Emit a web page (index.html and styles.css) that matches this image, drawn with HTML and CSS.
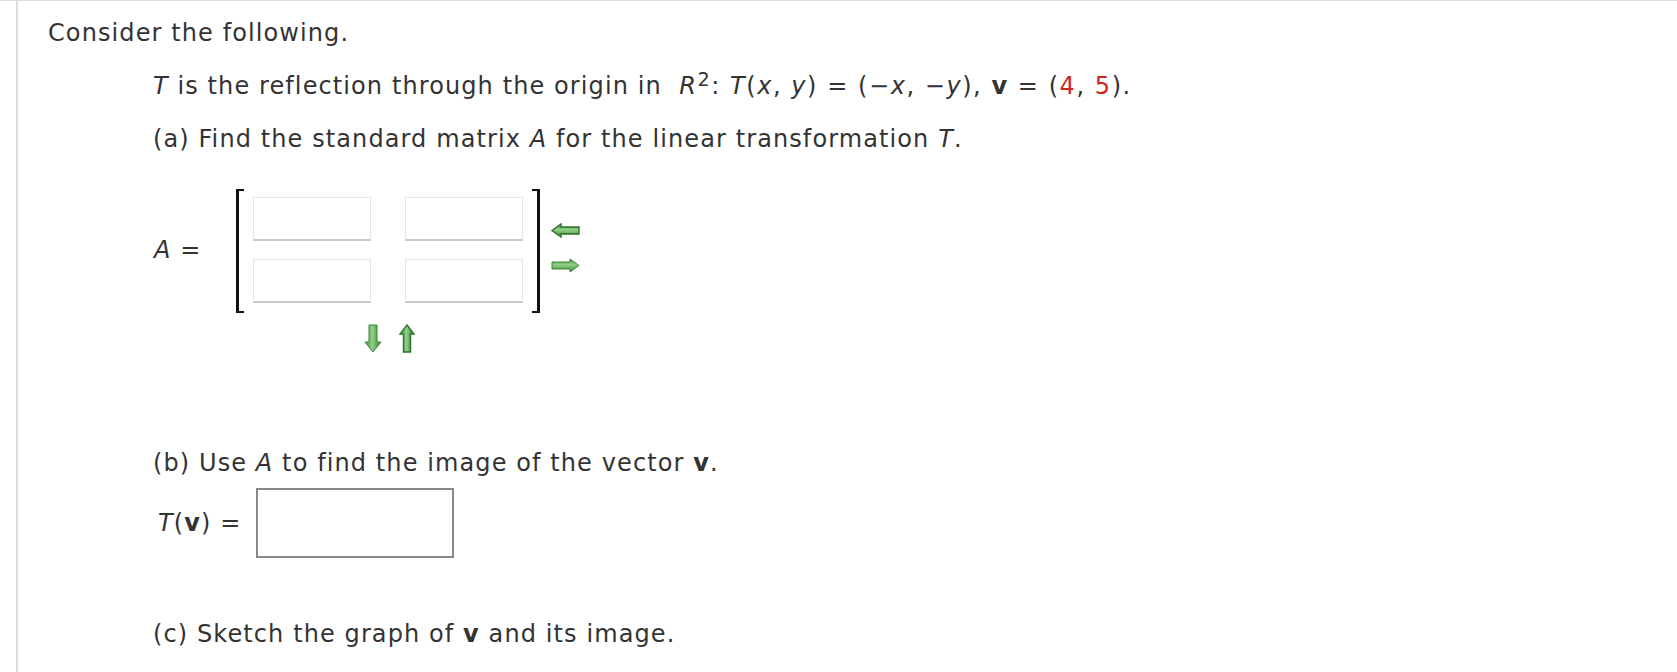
FILE: index.html
```html
<!DOCTYPE html>
<html lang="en">
<head>
  <meta charset="UTF-8" />
  <meta name="viewport" content="width=device-width, initial-scale=1.0" />
  <title>Linear Transformations</title>
  <link rel="stylesheet" href="styles.css">
</head>
<body>
  <div class="question">
    <p class="intro">Consider the following.</p>

    <div class="qbody">
      <p class="stmt"><i>T</i> is the reflection through the origin in &nbsp;<span class="math"><i>R</i><sup>2</sup>: <i>T</i>(<i>x</i>, <i>y</i>) = (−<i>x</i>, −<i>y</i>), <b>v</b> = (<span class="red">4</span>, <span class="red">5</span>).</span></p>
      <p class="part-a">(a) Find the standard matrix <i>A</i> for the linear transformation <i>T</i>.</p>

      <div class="matrix-row">
        <span class="mlabel"><i>A</i> =</span>
        <div class="matrix-wrap">
          <div class="matrix">
            <div class="bracket left"></div>
            <div class="cells">
              <input class="cell" type="text">
              <input class="cell" type="text">
              <input class="cell" type="text">
              <input class="cell" type="text">
            </div>
            <div class="bracket right"></div>
          </div>
          <div class="col-arrows">
            <svg width="18" height="29" viewBox="0 0 18 29">
              <defs>
                <linearGradient id="gv" x1="0" y1="0" x2="1" y2="0">
                  <stop offset="0" stop-color="#3f933c"/>
                  <stop offset="0.45" stop-color="#92d08a"/>
                  <stop offset="1" stop-color="#2f802c"/>
                </linearGradient>
              </defs>
              <polygon points="5,1 13,1 13,18 17,18 9,28 1,18 5,18" fill="url(#gv)" stroke="#3a8637" stroke-width="1"/>
            </svg>
            <svg width="16" height="29" viewBox="0 0 16 29">
              <polygon points="8,1 15,10 11.5,10 11.5,28 4.5,28 4.5,10 1,10" fill="url(#gv)" stroke="#2a7227" stroke-width="1.4"/>
            </svg>
          </div>
        </div>
        <div class="row-arrows">
          <svg width="29" height="15" viewBox="0 0 29 15">
            <defs>
              <linearGradient id="gh" x1="0" y1="0" x2="0" y2="1">
                <stop offset="0" stop-color="#3f933c"/>
                <stop offset="0.45" stop-color="#92d08a"/>
                <stop offset="1" stop-color="#2f802c"/>
              </linearGradient>
            </defs>
            <polygon points="1,7.5 10,1 10,4 28,4 28,11 10,11 10,14" fill="url(#gh)" stroke="#2a7227" stroke-width="1.4"/>
          </svg>
          <svg width="29" height="15" viewBox="0 0 29 15">
            <polygon points="28,7.5 19,1 19,4 1,4 1,11 19,11 19,14" fill="url(#gh)" stroke="#3a8637" stroke-width="1"/>
          </svg>
        </div>
      </div>

      <p class="part-b">(b) Use <i>A</i> to find the image of the vector <b>v</b>.</p>
      <div class="answer-row">
        <span class="alabel"><i>T</i>(<b>v</b>) =</span>
        <input class="answer" type="text">
      </div>

      <p class="part-c">(c) Sketch the graph of <b>v</b> and its image.</p>
    </div>
  </div>
</body>
</html>
```

FILE: styles.css
```css
body {
  margin: 0;
  padding: 0;
  background: #fff;
  font-family: "DejaVu Sans", Verdana, sans-serif;
  font-size: 24px;
  line-height: 36px;
  letter-spacing: 1.1px;
  color: #333;
  border-top: 1px solid #ddd;
}
p {
  margin: 0;
}
.question {
  margin-left: 16px;
  border-left: 2px solid #ddd;
  padding: 14px 0 0 30px;
  min-height: 680px;
}
.qbody {
  padding-left: 105px;
}
.stmt {
  margin-top: 17px;
}
.stmt .math {
  letter-spacing: 1.55px;
}
.stmt sup {
  font-size: 0.8em;
  line-height: 0;
  vertical-align: 8px;
}
.red {
  color: #d0281e;
}
.part-a {
  margin-top: 17px;
}
.matrix-row {
  display: flex;
  align-items: flex-start;
  margin-top: 32px;
}
.mlabel {
  padding: 43px 0 0 1px;
  width: 82px;
}
.matrix-wrap {
  display: flex;
  flex-direction: column;
  align-items: center;
}
.matrix {
  display: flex;
  height: 124px;
}
.bracket {
  width: 5px;
  border: 3px solid #111;
  border-top-width: 2px;
  border-bottom-width: 2px;
}
.bracket.left {
  border-right: none;
}
.bracket.right {
  border-left: none;
}
.cells {
  display: grid;
  grid-template-columns: 118px 118px;
  grid-template-rows: 44px 44px;
  column-gap: 34px;
  row-gap: 18px;
  padding: 8px 9px 0 9px;
}
.cell {
  box-sizing: border-box;
  width: 118px;
  height: 44px;
  margin: 0;
  border: 1px solid #e6e6e6;
  border-bottom: 2px solid #c8c8c8;
  background: #fff;
}
.col-arrows {
  display: flex;
  gap: 17px;
  margin-top: 11px;
  margin-left: 3px;
}
.row-arrows {
  display: flex;
  flex-direction: column;
  gap: 20px;
  margin: 34px 0 0 11px;
}
.part-b {
  margin-top: 92px;
}
.answer-row {
  display: flex;
  align-items: center;
  margin-top: 7px;
}
.alabel {
  padding-left: 5px;
  width: 98px;
}
.answer {
  box-sizing: border-box;
  width: 198px;
  height: 70px;
  margin: 0;
  border: 2px solid #888;
  background: #fff;
}
.part-c {
  margin-top: 58px;
}
```
